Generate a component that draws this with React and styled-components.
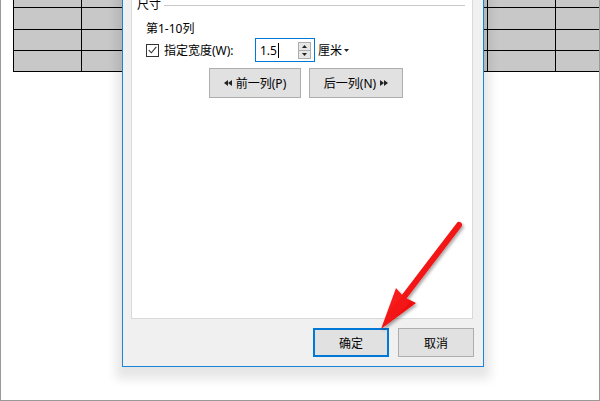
import React from 'react'
import styled, { createGlobalStyle } from 'styled-components'

const Global = createGlobalStyle`
	html, body {
		margin: 0;
		padding: 0;
		background: #fff;
	}
	body {
		font-family: "Noto Sans", "Noto Sans CJK SC", sans-serif;
		font-size: 12px;
		color: #000;
	}
`

const Page = styled.div`
	position: relative;
	width: 600px;
	height: 401px;
	box-sizing: border-box;
	border: 1px solid #9a9a9a;
	border-top: none;
	background: #fff;
	overflow: hidden;
`

const Sheet = styled.div`
	display: grid;
	grid-template-columns: repeat(9, 66.75px);
	grid-template-rows: 22px 21px 20px 20px;
	column-gap: 1px;
	row-gap: 1px;
	padding: 0 0 1px 1px;
	margin: -15px 0 0 12px;
	width: max-content;
	background: #000;
`

const Cell = styled.div`
	background: #c8c8c8;
`

const Dialog = styled.div`
	position: absolute;
	left: 121px;
	top: -40px;
	width: 362px;
	height: 407px;
	box-sizing: border-box;
	border: 1px solid #1c84d8;
	background: #f0f0f0;
	box-shadow: 0 6px 10px 6px rgba(0, 0, 0, 0.1);
	display: flex;
	flex-direction: column;
	padding: 0 9px 9px 8px;
`

const Panel = styled.div`
	flex: 1;
	margin-right: 1px;
	background: #fff;
	border: 1px solid #d9d9d9;
	border-top: none;
	padding: 37px 7px 0 5px;
	display: flex;
	flex-direction: column;
`

const GroupHead = styled.div`
	display: flex;
	align-items: center;
	gap: 3px;
	height: 14px;
	line-height: 14px;
`

const GroupLine = styled.div`
	flex: 1;
	height: 1px;
	background: #c8c8c8;
`

const Group = styled.div`
	padding-left: 9px;
	display: flex;
	flex-direction: column;
`

const RangeLabel = styled.div`
	margin-top: 9px;
	height: 16px;
	line-height: 16px;
`

const WidthRow = styled.div`
	margin-top: 1px;
	display: flex;
	align-items: center;
	height: 24px;
`

const Check = styled.div`
	width: 11px;
	height: 11px;
	border: 1px solid #333;
	background: #fff;
	display: grid;
	place-items: center;
`

const FieldLabel = styled.div`
	width: 91px;
	margin-left: 5px;
`

const Input = styled.div`
	width: 54px;
	height: 22px;
	border: 1px solid #0078d7;
	background: #fff;
	display: flex;
	align-items: center;
	padding-left: 4px;
`

const Value = styled.span`
	font-size: 12px;
`

const Caret = styled.span`
	width: 1px;
	height: 15px;
	background: #000;
	margin-left: 1px;
`

const Spin = styled.div`
	margin-left: auto;
	margin-right: 3px;
	display: flex;
	flex-direction: column;
`

const SpinBtn = styled.div`
	width: 11px;
	height: 7px;
	border: 1px solid #adadad;
	background: #e6e6e6;
	display: grid;
	place-items: center;
	& + & {
		border-top: none;
	}
`

const Unit = styled.div`
	margin-left: 3px;
	display: flex;
	align-items: center;
	gap: 2px;
`

const NavRow = styled.div`
	margin-top: 6px;
	padding-left: 63px;
	display: flex;
	gap: 8px;
`

const Button = styled.div`
	width: ${p => p.$w}px;
	height: ${p => p.$h}px;
	box-sizing: border-box;
	background: #e1e1e1;
	border: 1px solid ${p => (p.$primary ? '#0078d7' : '#adadad')};
	box-shadow: ${p => (p.$primary ? 'inset 0 0 0 1px #0078d7' : 'none')};
	display: flex;
	align-items: center;
	justify-content: center;
	gap: 4px;
	font-size: 12px;
`

const Footer = styled.div`
	margin-top: 9px;
	display: flex;
	justify-content: flex-end;
	gap: 9px;
`

const ArrowLayer = styled.svg`
	position: absolute;
	left: 0;
	top: 0;
	pointer-events: none;
`

function Tri({ dir }) {
	const d = dir === 'left' ? 'M4 0 L0 3 L4 6 Z M8 0 L4 3 L8 6 Z' : 'M0 0 L4 3 L0 6 Z M4 0 L8 3 L4 6 Z'
	return (
		<svg width="8" height="6" viewBox="0 0 8 6">
			<path d={d} fill="#222" />
		</svg>
	)
}

function App() {
	const cells = Array.from({ length: 36 })
	return (
		<Page>
			<Global />
			<Sheet>
				{cells.map((_, i) => (
					<Cell key={i} />
				))}
			</Sheet>

			<Dialog>
				<Panel>
					<GroupHead>
						<span>尺寸</span>
						<GroupLine />
					</GroupHead>
					<Group>
						<RangeLabel>第1-10列</RangeLabel>
						<WidthRow>
							<Check>
								<svg width="9" height="8" viewBox="0 0 9 8">
									<path d="M0.8 4.2 L3.3 6.8 L8.3 0.8" fill="none" stroke="#333" strokeWidth="1.1" />
								</svg>
							</Check>
							<FieldLabel>指定宽度(W):</FieldLabel>
							<Input>
								<Value>1.5</Value>
								<Caret />
								<Spin>
									<SpinBtn>
										<svg width="5" height="3" viewBox="0 0 5 3"><path d="M0 3 L2.5 0 L5 3 Z" fill="#222" /></svg>
									</SpinBtn>
									<SpinBtn>
										<svg width="5" height="3" viewBox="0 0 5 3"><path d="M0 0 L2.5 3 L5 0 Z" fill="#222" /></svg>
									</SpinBtn>
								</Spin>
							</Input>
							<Unit>
								厘米
								<svg width="5" height="3" viewBox="0 0 5 3"><path d="M0 0 L2.5 3 L5 0 Z" fill="#222" /></svg>
							</Unit>
						</WidthRow>
						<NavRow>
							<Button $w={92} $h={30}>
								<Tri dir="left" />
								前一列(P)
							</Button>
							<Button $w={94} $h={30}>
								后一列(N)
								<Tri dir="right" />
							</Button>
						</NavRow>
					</Group>
				</Panel>
				<Footer>
					<Button $w={76} $h={29} $primary>确定</Button>
					<Button $w={76} $h={29}>取消</Button>
				</Footer>
			</Dialog>

			<ArrowLayer width="600" height="401" viewBox="0 0 600 401">
				<defs>
					<filter id="sh" x="-20%" y="-20%" width="140%" height="140%">
						<feDropShadow dx="1.5" dy="2" stdDeviation="1.5" floodColor="#000" floodOpacity="0.35" />
					</filter>
					<linearGradient id="rd" x1="0" y1="0" x2="1" y2="1">
						<stop offset="0" stopColor="#ff2a2a" />
						<stop offset="1" stopColor="#e60000" />
					</linearGradient>
				</defs>
				<g filter="url(#sh)">
					<line x1="458" y1="225" x2="403" y2="297" stroke="url(#rd)" strokeWidth="6" strokeLinecap="round" />
					<path d="M395 288 L403 297 L415 303 L380 329 Z" fill="url(#rd)" />
				</g>
			</ArrowLayer>
		</Page>
	)
}

export default App
